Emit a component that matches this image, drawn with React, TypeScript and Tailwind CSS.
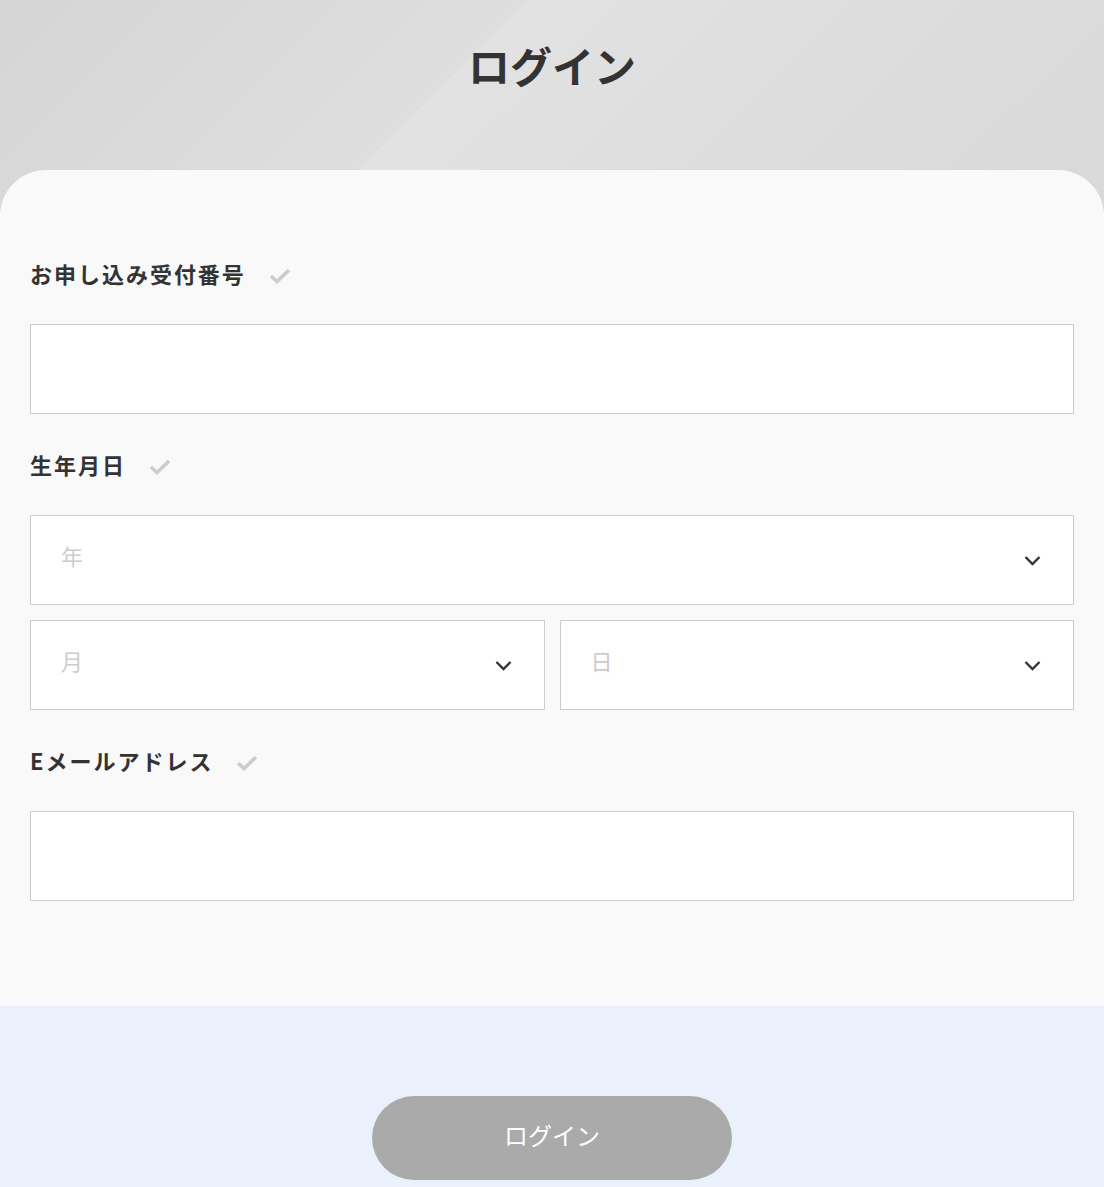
import type { ReactNode } from "react";

const font = "font-['Noto_Sans_CJK_JP','Noto_Sans',sans-serif]";

function Check() {
  return (
    <svg width="22" height="16" viewBox="0 0 22 16" aria-hidden="true" className="shrink-0">
      <polyline points="2,8 8,13.5 20,2" fill="none" stroke="#cccccc" strokeWidth="3.6" />
    </svg>
  );
}

function Chevron() {
  return (
    <svg width="17" height="11" viewBox="0 0 17 11" aria-hidden="true" className="shrink-0">
      <polyline points="1.5,2 8.5,9 15.5,2" fill="none" stroke="#333333" strokeWidth="2.4" />
    </svg>
  );
}

function Label({ children }: { children: ReactNode }) {
  return (
    <div className="flex items-center gap-[23px] h-8 mb-8">
      <span className="text-[22px] leading-8 font-bold tracking-[0.09em] text-[#333] mb-[6px]">{children}</span>
      <Check />
    </div>
  );
}

function TextField() {
  return <input type="text" className="block w-full h-[90px] bg-white border border-[#cccccc] outline-none px-[30px] text-[22px]" />;
}

function SelectBox({ placeholder }: { placeholder: string }) {
  return (
    <div className="flex items-center justify-between h-[90px] bg-white border border-[#cccccc] pl-[30px] pr-[32px]">
      <span className="text-[22px] text-[#cccccc] leading-none pb-[10px]">{placeholder}</span>
      <Chevron />
    </div>
  );
}

export default function App() {
  return (
    <div className={`${font} w-full min-h-screen bg-[#ebf1fc]`}>
      <div className="bg-[#dadada] bg-[linear-gradient(135deg,#d5d5d5_0%,#dedede_40%,#e2e2e2_40%,#dcdcdc_75%,#d9d9d9_100%)] bg-[length:100%_216px] bg-no-repeat">
        <header className="h-[170px] pt-[35px]">
          <h1 className="text-center text-[42px] leading-[60px] font-bold text-[#333]">ログイン</h1>
        </header>

        <main className="bg-[#f9f9f9] rounded-t-[46px] px-[30px] pt-[90px] pb-[105px]">
          <Label>お申し込み受付番号</Label>
          <TextField />

          <div className="mt-[37px]">
            <Label>生年月日</Label>
            <div className="flex flex-col gap-[15px]">
              <SelectBox placeholder="年" />
              <div className="grid grid-cols-2 gap-[15px]">
                <SelectBox placeholder="月" />
                <SelectBox placeholder="日" />
              </div>
            </div>
          </div>

          <div className="mt-[37px]">
            <Label>Eメールアドレス</Label>
            <TextField />
          </div>
        </main>
      </div>

      <div className="pt-[90px] pb-10 flex justify-center">
        <button className="w-[360px] h-[84px] rounded-full bg-[#aaaaaa] text-white text-[24px] leading-none pb-[6px]">
          ログイン
        </button>
      </div>
    </div>
  );
}
